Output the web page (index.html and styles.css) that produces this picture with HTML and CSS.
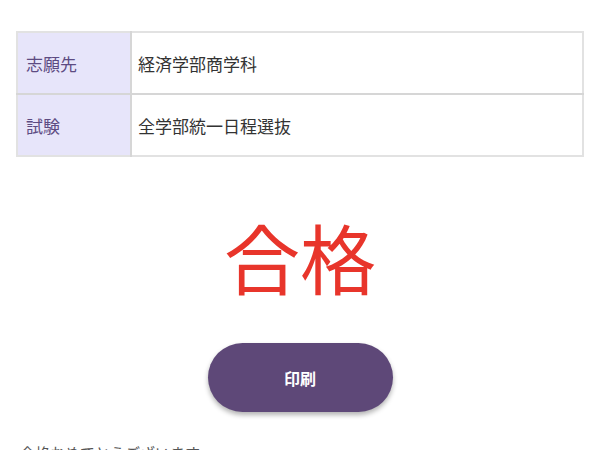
FILE: index.html
```html
<!DOCTYPE html>
<html lang="ja">
<head>
<meta charset="utf-8">
<link rel="stylesheet" href="styles.css">
</head>
<body>
<div class="page">
  <table class="info">
    <tr>
      <th>志願先</th>
      <td>経済学部商学科</td>
    </tr>
    <tr>
      <th>試験</th>
      <td>全学部統一日程選抜</td>
    </tr>
  </table>
  <div class="result">合格</div>
  <div class="actions">
    <button class="print">印刷</button>
  </div>
  <p class="note">合格おめでとうございます。</p>
</div>
</body>
</html>
```

FILE: styles.css
```css
html, body {
  margin: 0;
  padding: 0;
  background: #ffffff;
}
body {
  font-family: "Noto Sans CJK JP", "Noto Sans", sans-serif;
  overflow: hidden;
}
.page {
  padding: 31px 16px 0 16px;
}
.info {
  width: 100%;
  border-collapse: collapse;
  border: 2px solid #e2e2e2;
}
.info th, .info td {
  height: 60px;
  padding: 0 0 0 8px;
  font-size: 17px;
  font-weight: normal;
  text-align: left;
  border-bottom: 2px solid #d6d6d6;
}
.info tr:last-child th, .info tr:last-child td {
  border-bottom: none;
}
.info th {
  width: 104px;
  background: #e7e5fa;
  color: #5d4b82;
  border-right: 2px solid #d6d6d6;
}
.info td {
  padding-left: 6px;
  color: #333333;
}
.result {
  margin-top: 61px;
  font-size: 76px;
  line-height: 76px;
  text-align: center;
  color: #e8352b;
}
.actions {
  display: flex;
  justify-content: center;
  margin-top: 49px;
}
.print {
  width: 185px;
  height: 69px;
  border: none;
  border-radius: 35px;
  background: #5e4878;
  color: #ffffff;
  font-family: "Noto Sans CJK JP", sans-serif;
  font-size: 16px;
  font-weight: bold;
  box-shadow: 0 3px 5px rgba(0, 0, 0, 0.3);
}
.note {
  margin: 30px 0 0 4px;
  font-size: 15px;
  color: #555555;
}
```
